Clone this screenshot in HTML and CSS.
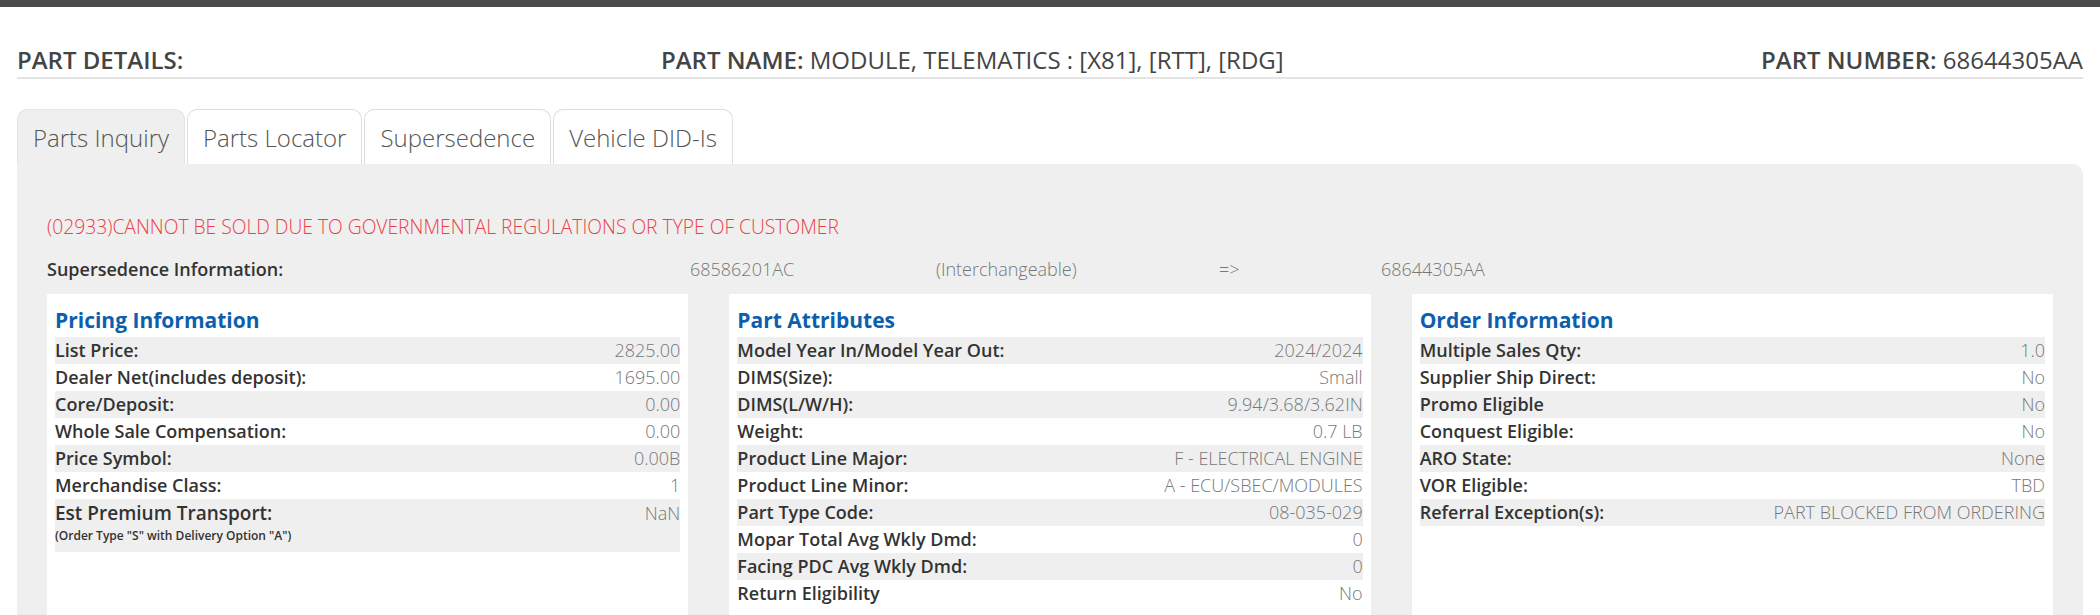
FILE: index.html
```html
<!DOCTYPE html>
<html lang="en">
<head>
  <meta charset="UTF-8">
  <title>Part Details</title>
  <link rel="stylesheet" href="styles.css">
</head>
<body>

<div class="topbar"></div>

<div class="page">
  <!-- header -->
  <div class="part-header">
    <div><b>PART DETAILS:</b></div>
    <div><b>PART NAME:</b> MODULE, TELEMATICS : [X81], [RTT], [RDG]</div>
    <div class="right"><b>PART NUMBER:</b> 68644305AA</div>
  </div>

  <!-- tabs -->
  <ul class="tabs">
    <li class="active">Parts Inquiry</li>
    <li>Parts Locator</li>
    <li>Supersedence</li>
    <li>Vehicle DID-Is</li>
  </ul>

  <div class="tab-panel">
    <div class="alert">(02933)CANNOT BE SOLD DUE TO GOVERNMENTAL REGULATIONS OR TYPE OF CUSTOMER</div>

    <div class="supersedence">
      <span class="lbl">Supersedence Information:</span>
      <span>68586201AC</span>
      <span>(Interchangeable)</span>
      <span>=&gt;</span>
      <span>68644305AA</span>
    </div>

    <div class="cards">
      <div class="card">
        <h3>Pricing Information</h3>
        <div class="row"><span class="lbl">List Price:</span><span class="val">2825.00</span></div>
        <div class="row"><span class="lbl">Dealer Net(includes deposit):</span><span class="val">1695.00</span></div>
        <div class="row"><span class="lbl">Core/Deposit:</span><span class="val">0.00</span></div>
        <div class="row"><span class="lbl">Whole Sale Compensation:</span><span class="val">0.00</span></div>
        <div class="row"><span class="lbl">Price Symbol:</span><span class="val">0.00B</span></div>
        <div class="row"><span class="lbl">Merchandise Class:</span><span class="val">1</span></div>
        <div class="row tall">
          <div>
            <div class="lbl big">Est Premium Transport:</div>
            <div class="note">(Order Type "S" with Delivery Option "A")</div>
          </div>
          <span class="val">NaN</span>
        </div>
      </div>

      <div class="card">
        <h3>Part Attributes</h3>
        <div class="row"><span class="lbl">Model Year In/Model Year Out:</span><span class="val">2024/2024</span></div>
        <div class="row"><span class="lbl">DIMS(Size):</span><span class="val">Small</span></div>
        <div class="row"><span class="lbl">DIMS(L/W/H):</span><span class="val">9.94/3.68/3.62IN</span></div>
        <div class="row"><span class="lbl">Weight:</span><span class="val">0.7 LB</span></div>
        <div class="row"><span class="lbl">Product Line Major:</span><span class="val">F - ELECTRICAL ENGINE</span></div>
        <div class="row"><span class="lbl">Product Line Minor:</span><span class="val">A - ECU/SBEC/MODULES</span></div>
        <div class="row"><span class="lbl">Part Type Code:</span><span class="val">08-035-029</span></div>
        <div class="row"><span class="lbl">Mopar Total Avg Wkly Dmd:</span><span class="val">0</span></div>
        <div class="row"><span class="lbl">Facing PDC Avg Wkly Dmd:</span><span class="val">0</span></div>
        <div class="row"><span class="lbl">Return Eligibility</span><span class="val">No</span></div>
      </div>

      <div class="card">
        <h3>Order Information</h3>
        <div class="row"><span class="lbl">Multiple Sales Qty:</span><span class="val">1.0</span></div>
        <div class="row"><span class="lbl">Supplier Ship Direct:</span><span class="val">No</span></div>
        <div class="row"><span class="lbl">Promo Eligible</span><span class="val">No</span></div>
        <div class="row"><span class="lbl">Conquest Eligible:</span><span class="val">No</span></div>
        <div class="row"><span class="lbl">ARO State:</span><span class="val">None</span></div>
        <div class="row"><span class="lbl">VOR Eligible:</span><span class="val">TBD</span></div>
        <div class="row"><span class="lbl">Referral Exception(s):</span><span class="val">PART BLOCKED FROM ORDERING</span></div>
      </div>
    </div>
  </div>
</div>

</body>
</html>
```

FILE: styles.css
```css
html, body { overflow: hidden; }
body {
  margin: 0;
  font-family: "Open Sans", "Liberation Sans", sans-serif;
  font-stretch: 92%;
  color: #333;
  background: #fff;
}
b { font-weight: 600; }

.topbar { height: 7px; background: #4b4b4b; }
.page { padding: 0 17px; }

.part-header {
  display: grid;
  grid-template-columns: 644px 1fr auto;
  padding: 37px 0 1px;
  border-bottom: 2px solid #e4e4e4;
  font-size: 24px;
  line-height: 32px;
  color: #444;
}
.part-header .right { text-align: right; }

.tabs {
  display: flex;
  gap: 2px;
  margin: 30px 0 0;
  padding: 0;
  list-style: none;
}
.tabs li {
  padding: 12px 15px 10px;
  font-size: 24px;
  line-height: 32px;
  font-weight: 300;
  color: #555;
  background: #fff;
  border: 1px solid #ddd;
  border-bottom: 0;
  border-radius: 10px 10px 0 0;
}
.tabs li.active { background: #efefef; border-color: #e4e4e4; }

.tab-panel {
  background: #efefef;
  border-radius: 0 10px 0 0;
  padding: 50px 30px 0;
  height: 500px;
}

.alert {
  color: #ec4147;
  font-size: 19.25px;
  line-height: 26px;
  font-weight: 300;
}

.supersedence {
  display: grid;
  grid-template-columns: 643px 246px 283px 162px auto;
  margin-top: 16px;
  font-size: 18px;
  line-height: 26px;
  font-weight: 300;
  color: #777;
}
.supersedence .lbl { font-weight: 600; color: #333; }

.cards {
  display: grid;
  grid-template-columns: repeat(3, 1fr);
  gap: 41px;
  margin-top: 12px;
}
.card {
  background: #fff;
  padding: 12px 8px;
  min-height: 340px;
}
.card h3 {
  margin: 0 0 3px;
  font-size: 21px;
  line-height: 28px;
  font-weight: 700;
  color: #0d5fae;
}
.row {
  display: flex;
  justify-content: space-between;
  font-size: 18px;
  line-height: 27px;
}
.row:nth-of-type(odd) { background: #efefef; }
.row .lbl { font-weight: 600; color: #333; }
.row .val { font-weight: 300; color: #777; }
.row.tall { line-height: 28px; padding-bottom: 8px; }
.lbl.big { font-size: 19px; }
.note { font-size: 12px; line-height: 17px; font-weight: 600; color: #333; }
```
